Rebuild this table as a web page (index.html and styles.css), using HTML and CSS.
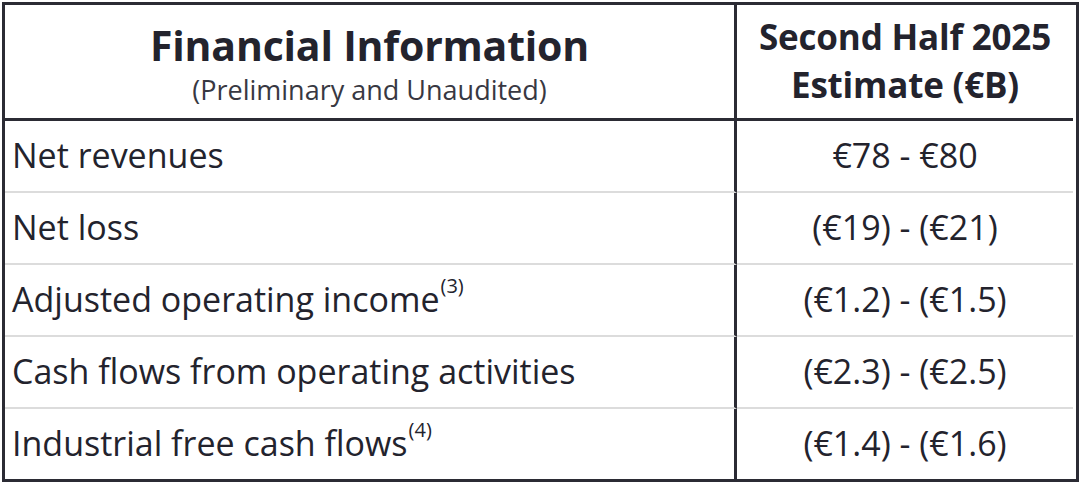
FILE: index.html
```html
<!DOCTYPE html>
<html>
<head>
<meta charset="utf-8">
<link rel="stylesheet" href="styles.css">
</head>
<body>
<div class="table">
  <div class="cell head head-left">
    <div class="title">Financial Information</div>
    <div class="subtitle">(Preliminary and Unaudited)</div>
  </div>
  <div class="cell head head-right">
    <div class="col-title">Second Half 2025</div>
    <div class="col-title">Estimate (€B)</div>
  </div>

  <div class="cell label sep">Net revenues</div>
  <div class="cell value sep">€78 - €80</div>

  <div class="cell label sep">Net loss</div>
  <div class="cell value sep">(€19) - (€21)</div>

  <div class="cell label sep">Adjusted operating income<sup class="note">(3)</sup></div>
  <div class="cell value sep">(€1.2) - (€1.5)</div>

  <div class="cell label sep">Cash flows from operating activities</div>
  <div class="cell value sep">(€2.3) - (€2.5)</div>

  <div class="cell label">Industrial free cash flows<sup class="note">(4)</sup></div>
  <div class="cell value">(€1.4) - (€1.6)</div>
</div>
</body>
</html>
```

FILE: styles.css
```css
html, body {
  margin: 0;
  padding: 0;
  background: #ffffff;
}

body {
  padding: 2px 0 0 2px;
  font-family: "Open Sans", "Noto Sans", sans-serif;
  color: #23232d;
}

.table {
  width: 1071px;
  border: 3px solid #2b2b34;
  display: grid;
  grid-template-columns: 732px 336px;
}

.cell {
  box-sizing: border-box;
}

.head {
  border-bottom: 3px solid #2b2b34;
  height: 116px;
  display: flex;
  flex-direction: column;
  align-items: center;
  justify-content: center;
}

.head-left {
  border-right: 3px solid #2b2b34;
  padding-top: 4px;
}

.title {
  font-weight: 700;
  font-size: 41px;
  line-height: 48px;
  letter-spacing: -0.2px;
}

.subtitle {
  font-size: 27px;
  line-height: 34px;
  margin-top: 4px;
  color: #383842;
}

.head-right {
  padding-bottom: 2px;
}

.col-title {
  font-weight: 700;
  font-size: 35px;
  line-height: 48px;
  letter-spacing: -0.2px;
}

.label {
  border-right: 3px solid #2b2b34;
  height: 70px;
  display: flex;
  align-items: center;
  padding-left: 7px;
  padding-bottom: 2px;
  font-size: 34px;
  white-space: nowrap;
}

.value {
  height: 70px;
  display: flex;
  align-items: center;
  justify-content: center;
  padding-bottom: 2px;
  font-size: 34px;
  white-space: nowrap;
}

.sep {
  height: 72px;
  border-bottom: 2px solid #dcdcdc;
}

.note {
  font-size: 20px;
  line-height: 1;
  align-self: flex-start;
  margin-top: 11px;
  margin-left: 1px;
}
```
